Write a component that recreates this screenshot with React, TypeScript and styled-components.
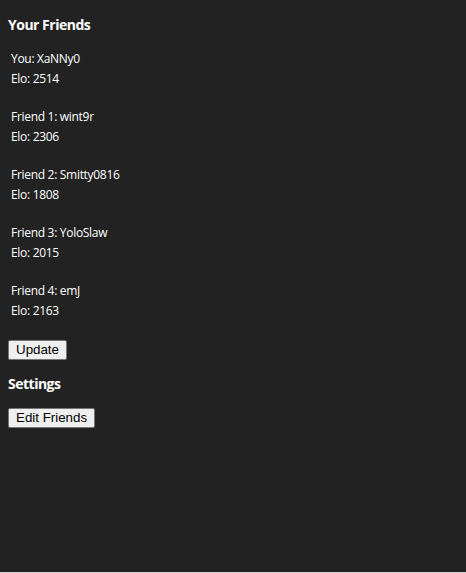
import React from "react";
import styled, { createGlobalStyle } from "styled-components";

const Global = createGlobalStyle`
  html { background: #d4d4d4; }
  body { margin: 0; }
`;

const Page = styled.div`
  box-sizing: border-box;
  height: 572px;
  background: #222222;
  color: #ffffff;
  padding: 1px 8px;
  font-family: "Open Sans", "Noto Sans", sans-serif;
`;

const Heading = styled.h3<{ $top: number; $bottom: number }>`
  margin: ${(p) => p.$top}px 0 ${(p) => p.$bottom}px;
  font-size: 14px;
  font-weight: 700;
  line-height: 20px;
  letter-spacing: -0.5px;
`;

const FriendList = styled.div`
  display: flex;
  flex-direction: column;
  gap: 18px;
  padding-left: 3px;
`;

const Friend = styled.div`
  font-size: 12px;
  line-height: 20px;
  letter-spacing: -0.3px;
`;

const ButtonRow = styled.div<{ $top: number }>`
  display: flex;
  margin-top: ${(p) => p.$top}px;
`;

const Button = styled.button`
  font-family: "Liberation Sans", Arial, sans-serif;
  font-size: 13.333px;
  color: #000;
  background: #efefef;
  border: 1px solid #767676;
  border-radius: 2px;
  padding: 1px 7px;
  margin: 0;
  height: 20px;
  line-height: 16px;
`;

const friends = [
  { label: "You", name: "XaNNy0", elo: 2514 },
  { label: "Friend 1", name: "wint9r", elo: 2306 },
  { label: "Friend 2", name: "Smitty0816", elo: 1808 },
  { label: "Friend 3", name: "YoloSlaw", elo: 2015 },
  { label: "Friend 4", name: "emJ", elo: 2163 },
];

export default function App() {
  return (
    <>
      <Global />
      <Page>
        <Heading $top={14} $bottom={14}>Your Friends</Heading>
        <FriendList>
          {friends.map((f) => (
            <Friend key={f.label}>
              {f.label}: {f.name}
              <br />
              Elo: {f.elo}
            </Friend>
          ))}
        </FriendList>
        <ButtonRow $top={19}>
          <Button>Update</Button>
        </ButtonRow>
        <Heading $top={14} $bottom={14}>Settings</Heading>
        <ButtonRow $top={0}>
          <Button>Edit Friends</Button>
        </ButtonRow>
      </Page>
    </>
  );
}
